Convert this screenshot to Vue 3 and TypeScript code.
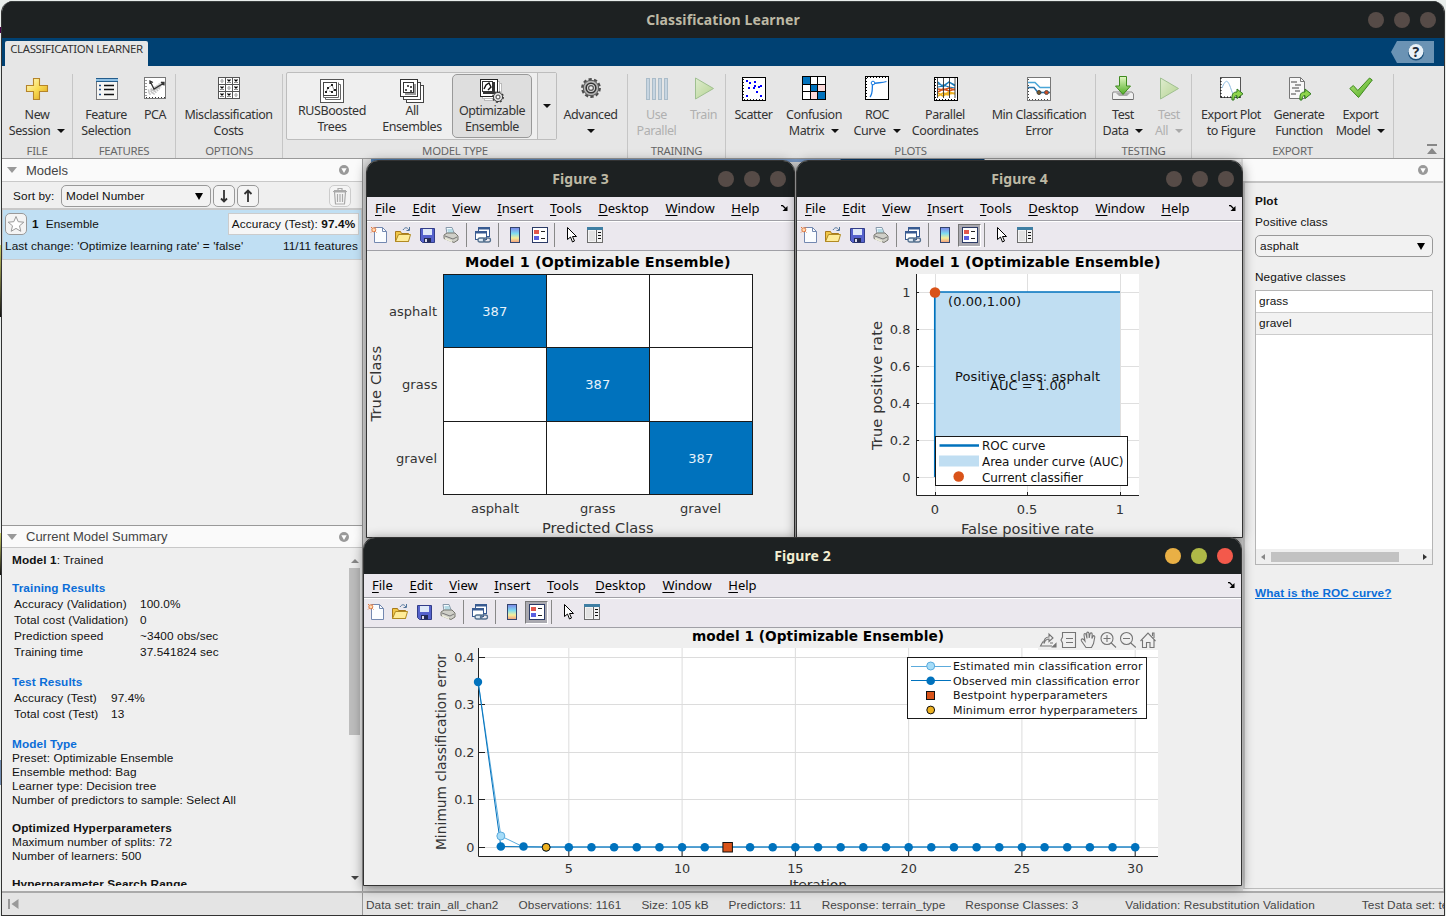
<script setup lang="ts">
interface Tool {
  icon: string
  lines: string[]
  w: number
  arrow?: boolean
  disabled?: boolean
}
interface Section {
  name: string
  w: number
  pad: number
  tools: Tool[]
}
interface Label {
  t: string
  x: number
  y: number
  w: number
  s: number
}

const icons: Record<string, string> = {
  plus: '<defs><linearGradient id="gp" x1="0" y1="0" x2="1" y2="1"><stop offset="0" stop-color="#fffbd0"/><stop offset=".5" stop-color="#f9dc55"/><stop offset="1" stop-color="#dba013"/></linearGradient></defs><path d="M8.5 1.5h6v7h8v6h-8v8h-6v-8h-7v-6h7z" fill="url(#gp)" stroke="#b5842a" stroke-width="1.1"/>',
  feature: '<g transform="translate(1 0)"><rect x="1.5" y="1.5" width="21" height="21" fill="#f5f5f3" stroke="#77777a"/><rect x="1" y="1" width="22" height="4" fill="#8fc0e4"/><path d="M1 4.5h22M1 1.5h22" stroke="#245d8c"/><path d="M9 8.5h10M9 12.5h10M9 17.5h10" stroke="#111" stroke-width="1.4"/><path d="M4 8.5h2M4 12.5h2M4 17.5h2" stroke="#1b4c8c" stroke-width="1.6"/></g>',
  pca: '<rect x="1.5" y=".5" width="21" height="21" fill="#fff" stroke="#777"/><path d="M3 3v18M3 20.5h19" stroke="#333" stroke-dasharray="1 2"/><path d="M6 17L20 6M8 13l10-4M10 17l7-7M5 14l5-1M12 11l8-6" stroke="#c4c4c4" stroke-width="3" stroke-dasharray="1.5 1"/><path d="M7 4l4 8 10-6M7 7V4l3 1.5M18 5.5h3v3" fill="none" stroke="#333" stroke-width="1.3"/>',
  costs: '<rect x="1.5" y=".5" width="21" height="21" fill="#fff" stroke="#555"/><path d="M8.5 0v22M15.5 0v22M1 7.5h22M1 14.5h22" stroke="#555"/><path d="M10.5 2.5l3 3m0-3l-3 3M17.5 2.5l3 3m0-3l-3 3M3.5 9.5l3 3m0-3l-3 3M17.5 9.5l3 3m0-3l-3 3M3.5 16.5l3 3m0-3l-3 3M10.5 16.5l3 3m0-3l-3 3" stroke="#000" stroke-width="1.2"/><g fill="none" stroke="#999"><ellipse cx="5" cy="4" rx="1" ry="1.5"/><ellipse cx="12" cy="11" rx="1" ry="1.5"/><ellipse cx="19" cy="18" rx="1" ry="1.5"/></g>',
  trees: '<rect x=".5" y=".5" width="23" height="23" fill="#fff" stroke="#555"/><path d="M5.5 18v2.5h15V5.5H18M3.5 16v2.5h15V3.5" fill="none" stroke="#666"/><rect x="3.5" y="3.5" width="13" height="13" fill="#fff" stroke="#444"/><path d="M6 13l2-4 4-3 2 5-2 2-3-1" fill="none" stroke="#999"/><path d="M5 12h2v2H5zM7 8h2v2H7zM11 5h2v2h-2zM14 10h2v2h-2zM11 12h2v2h-2z" fill="#222"/>',
  all: '<rect x="6.5" y="6.5" width="17" height="17" fill="#fff" stroke="#444"/><rect x="3.5" y="3.5" width="17" height="17" fill="#fff" stroke="#444"/><rect x=".5" y=".5" width="17" height="17" fill="#fff" stroke="#333"/><rect x="5" y="5" width="11" height="11" fill="#999"/><rect x="3.5" y="3.5" width="10" height="10" fill="#fff" stroke="#333"/><path d="M5 10h2v2H5zM7 6h2v2H7zM10 7h2v2h-2zM10 11h2v2h-2z" fill="#555"/>',
  opt: '<g fill="#fff" stroke="#bbb"><rect x="4.5" y="4.5" width="17" height="17"/><rect x="2.5" y="2.5" width="17" height="17"/></g><rect x=".5" y=".5" width="17" height="17" fill="#fff" stroke="#222"/><rect x="3" y="3" width="12" height="12" fill="#333"/><rect x="2.5" y="2.5" width="10" height="10" fill="#fff" stroke="#333"/><path d="M4 10l2-4 3-2 2 4-3 3" fill="none" stroke="#111" stroke-width="1.4"/><circle cx="18" cy="18" r="4.600" fill="#ddd" stroke="#444"/><circle cx="18" cy="18" r="5.300" fill="none" stroke="#333" stroke-width="1.2" stroke-dasharray="2 2.160"/><circle cx="18" cy="18" r="2" fill="#fff" stroke="#444"/>',
  gear: '<circle cx="12" cy="11" r="8.800" fill="none" stroke="#4d4d4d" stroke-width="2.200" stroke-dasharray="3.300 2.230"/><circle cx="12" cy="11" r="7.700" fill="#b5b5b5" stroke="#555"/><circle cx="12" cy="11" r="4.800" fill="#d8d8d8" stroke="#333" stroke-width="1.6"/><circle cx="12" cy="11" r="2.400" fill="#eee" stroke="#555" stroke-width="1.2"/>',
  parallel: '<g fill="#a9c6de" stroke="#6f93ae"><rect x="1.5" y="1.5" width="3" height="21"/><rect x="7.5" y="1.5" width="3" height="21"/><rect x="13.5" y="1.5" width="3" height="21"/><rect x="19.5" y="1.5" width="3" height="21"/></g>',
  play: '<defs><linearGradient id="gg" x1="0" y1="0" x2="1" y2="1"><stop offset="0" stop-color="#d9f2b9"/><stop offset="1" stop-color="#86c440"/></linearGradient></defs><path d="M3.5 1L21.5 11.5 3.5 22z" fill="url(#gg)" stroke="#5b9b3c"/>',
  scatter: '<rect x=".5" y=".5" width="23" height="23" fill="#fff" stroke="#000"/><path d="M1.5 2v20M2 22.5h20" stroke="#222" stroke-dasharray="1 2"/><path d="M4 3h2v2H4zM7 5h2v2H7zM12 4h2v2h-2zM6 10h2v2H6zM12 8h2v2h-2zM11 10h2v2h-2zM16 9h2v2h-2zM18 8h2v2h-2zM14 14h2v2h-2zM4 18h2v2H4zM18 18h2v2h-2z" fill="#00f"/>',
  confusion: '<g transform="translate(0 -1)"><rect x=".5" y=".5" width="23" height="23" fill="#fff" stroke="#000"/><path d="M1 1h7v7H1zM9 9h6v6H9zM16 16h7v7h-7z" fill="#0072bd"/><path d="M16 9h7v6h-7zM9 16h6v7H9z" fill="#fbd9d9"/><path d="M8.5 0v24M15.5 0v24M0 8.5h24M0 15.5h24" stroke="#000"/></g>',
  roc: '<g transform="translate(0 -1)"><rect x=".5" y=".5" width="23" height="23" fill="#fff" stroke="#000"/><path d="M2 1.5h21M1.5 2v21" stroke="#000" stroke-dasharray="1 2"/><path d="M5 21c3-4 2-7 2.500-13 4-2 9-.5 14-2.500" fill="none" stroke="#1a7be0" stroke-width="1.3"/><circle cx="8" cy="7" r="1.800" fill="#fff" stroke="#1a7be0"/></g>',
  coords: '<g transform="translate(1 0)"><rect x=".5" y=".5" width="23" height="23" fill="#fff" stroke="#000"/><path d="M1.5 2v20M2 22.5h20" stroke="#000" stroke-dasharray="1 2"/><g fill="none" stroke-width="1.2"><path d="M4 5l5 5 6-5 6 4M4 7l5 1 6 2 6 1M4 10l5-1 6-4 6 3" stroke="#1a7ab8"/><path d="M4 12l5 1 6-2 6 2M4 15l5-3 6 2 6-2" stroke="#d95319" stroke-width="1.6"/><path d="M4 19l5-3 6 1 6-1M4 16l5 3 6-4 6 2M9 17l6 1" stroke="#edb120" stroke-width="1.6"/></g><path d="M3.500 1v20M9.500 1v20M15.500 1v20M21 1v20" stroke="#333" stroke-width=".9"/></g>',
  minerr: '<rect x=".5" y=".5" width="23" height="23" fill="#fff" stroke="#777"/><path d="M2 22.5h21M1.5 2v20" stroke="#444" stroke-dasharray="1 2"/><path d="M1 5.5h7l5 5h10" fill="none" stroke="#4aa6d8" stroke-width="1.5"/><path d="M1 10.5h6l4 5h12" fill="none" stroke="#2875ac" stroke-width="1.5"/><circle cx="12" cy="15.5" r="2" fill="#7a5a2a" stroke="#444"/><circle cx="19.5" cy="15.5" r="2" fill="#d04a20" stroke="#555"/>',
  testdata: '<path d="M2 15l-.5 2v5.500h21V17L21 15z" fill="#f0f0f0" stroke="#888"/><path d="M2 22.500h20" stroke="#666"/><path d="M5 16l3 3h8l3-3z" fill="#aaa"/><path d="M8.500 -.5h7V9h4L12 17.500 4.500 9h4z" fill="url(#gd)" stroke="#3f8a1e"/><defs><linearGradient id="gd" x1="0" y1="0" x2="0" y2="1"><stop offset="0" stop-color="#e2f7c4"/><stop offset="1" stop-color="#4fae23"/></linearGradient></defs>',
  exportplot: '<rect x="1.5" y=".5" width="20" height="20" fill="#fff" stroke="#555"/><path d="M2 1v20M2 20h20" stroke="#000" stroke-dasharray="1 2"/><path d="M3 11c4-10 6-8 9 1s5 8 7 4" fill="none" stroke="#8bbbe0"/><path d="M13 23c-.5-6 1-8 5-8v-3l6 4.800-6 4.800v-3c-2 0-3 1-3 4.400z" fill="#8ed44b" stroke="#2f7a1e"/>',
  generate: '<path d="M2.500 .5h11l4 4v17h-15z" fill="#f8f8f8" stroke="#777"/><path d="M13.500 .5v4h4" fill="none" stroke="#777"/><path d="M4 5h6M8 8h6M5 11h7M8 14h5M4 17h5" stroke="#444"/><path d="M13 23c-.5-6 1-8 5-8v-3l6 4.800-6 4.800v-3c-2 0-3 1-3 4.400z" fill="#8ed44b" stroke="#2f7a1e"/>',
  check: '<path d="M.8 11.500l3.500-3 4.500 5L20.500 1l2.800 2L9.500 20.500z" fill="url(#gc)" stroke="#3f8a1e"/><defs><linearGradient id="gc" x1="0" y1="0" x2="1" y2="1"><stop offset="0" stop-color="#b8ea7a"/><stop offset="1" stop-color="#4aa621"/></linearGradient></defs>',
}

const before: Section[] = [
  { name: 'FILE', w: 71, pad: 0, tools: [{ icon: 'plus', lines: ['New', 'Session'], w: 70, arrow: true }] },
  {
    name: 'FEATURES', w: 103, pad: 4, tools: [
      { icon: 'feature', lines: ['Feature', 'Selection'], w: 58 },
      { icon: 'pca', lines: ['PCA'], w: 40 },
    ],
  },
  { name: 'OPTIONS', w: 107, pad: 0, tools: [{ icon: 'costs', lines: ['Misclassification', 'Costs'], w: 105 }] },
]
const after: Section[] = [
  {
    name: 'TRAINING', w: 98, pad: 0, tools: [
      { icon: 'parallel', lines: ['Use', 'Parallel'], w: 57, disabled: true },
      { icon: 'play', lines: ['Train'], w: 37, disabled: true },
    ],
  },
  {
    name: 'PLOTS', w: 370, pad: 0, tools: [
      { icon: 'scatter', lines: ['Scatter'], w: 55 },
      { icon: 'confusion', lines: ['Confusion', 'Matrix'], w: 66, arrow: true },
      { icon: 'roc', lines: ['ROC', 'Curve'], w: 60, arrow: true },
      { icon: 'coords', lines: ['Parallel', 'Coordinates'], w: 76 },
      { icon: 'minerr', lines: ['Min Classification', 'Error'], w: 112 },
    ],
  },
  {
    name: 'TESTING', w: 96, pad: 2, tools: [
      { icon: 'testdata', lines: ['Test', 'Data'], w: 50, arrow: true },
      { icon: 'play', lines: ['Test', 'All'], w: 42, arrow: true, disabled: true },
    ],
  },
  {
    name: 'EXPORT', w: 202, pad: 0, tools: [
      { icon: 'exportplot', lines: ['Export Plot', 'to Figure'], w: 78 },
      { icon: 'generate', lines: ['Generate', 'Function'], w: 58 },
      { icon: 'check', lines: ['Export', 'Model'], w: 65, arrow: true },
    ],
  },
]
const gallery = [
  { icon: 'trees', lines: ['RUSBoosted', 'Trees'] },
  { icon: 'all', lines: ['All', 'Ensembles'] },
  { icon: 'opt', lines: ['Optimizable', 'Ensemble'] },
]

const status = ['Data set: train_all_chan2', 'Observations: 1161', 'Size: 105 kB', 'Predictors: 11', 'Response: terrain_type', 'Response Classes: 3']

const training = [
  ['Accuracy (Validation)', '100.0%'],
  ['Total cost (Validation)', '0'],
  ['Prediction speed', '~3400 obs/sec'],
  ['Training time', '37.541824 sec'],
]
const testing = [
  ['Accuracy (Test)', '97.4%'],
  ['Total cost (Test)', '13'],
]

const figures = [
  { id: 'f3', title: 'Figure 3', pressed: false, active: false },
  { id: 'f4', title: 'Figure 4', pressed: true, active: false },
  { id: 'f2', title: 'Figure 2', pressed: true, active: true },
]
const menus = ['File', 'Edit', 'View', 'Insert', 'Tools', 'Desktop', 'Window', 'Help']

const bar: Record<string, string> = {
  fnew: '<path d="M4.5 1.5h8l4 4v11h-12z" fill="#fbfdff" stroke="#7388b0"/><path d="M12.5 1.5v4h4" fill="none" stroke="#7388b0"/><circle cx="3.800" cy="3.800" r="2" fill="#ffd9b0" stroke="#e07840"/><path d="M1 1l1 1M6.500 1l-1 1M1 6.500l1-1M5.500 5.500l1 1" stroke="#e07840"/>',
  open: '<path d="M1.500 15.500v-10h5l1 2h7v8z" fill="#f0c648" stroke="#a8791a"/><path d="M1.500 15.500l3-7h12l-2 7z" fill="#ffec98" stroke="#b18a22"/><path d="M9 4c2-3 4-3 6 0M15.500 1v3.500h-3" fill="none" stroke="#51749b"/>',
  save: '<path d="M2.500 2.500h14v14h-12l-2-2z" fill="#5562cc" stroke="#333d88"/><rect x="5" y="3" width="9" height="6" fill="#dfe9f8"/><rect x="6" y="12" width="7" height="4.500" fill="#222a54"/><rect x="7" y="13" width="2" height="3" fill="#dde"/>',
  print: '<path d="M5 8L4 1.500h6L12.500 8z" fill="#f4faff" stroke="#8899aa"/><path d="M5.500 4h5M6 6h5" stroke="#7bc"/><path d="M2 9l3-2h8l3 3v4l-4 2.500-10-4z" fill="#cfcfc8" stroke="#77776f"/><path d="M3 10l8 3 4-2" fill="none" stroke="#777"/><path d="M3 12.500l7 3" stroke="#eed" stroke-width="1.5"/>',
  link: '<rect x="4.5" y="1.500" width="11" height="9" fill="#fff" stroke="#385a91"/><path d="M4 2.500h12" stroke="#385a91" stroke-width="2"/><rect x="1.5" y="5.500" width="11" height="8" fill="#fff" stroke="#385a91"/><path d="M1 6.500h12" stroke="#385a91" stroke-width="2"/><rect x="4" y="12" width="7" height="4" rx="2" fill="#dde8f2" stroke="#54708e" stroke-width="1.3"/><rect x="9.500" y="12" width="7" height="4" rx="2" fill="none" stroke="#54708e" stroke-width="1.3"/>',
  colorbar: '<defs><linearGradient id="cb" x1="0" y1="0" x2="0" y2="1"><stop offset="0" stop-color="#7c83e8"/><stop offset=".4" stop-color="#7fdcf0"/><stop offset=".7" stop-color="#f6ef9a"/><stop offset="1" stop-color="#f19a7c"/></linearGradient></defs><rect x="4.5" y="1.500" width="9" height="15" fill="url(#cb)" stroke="#33456e"/>',
  legend: '<rect x="1.5" y="1.5" width="15" height="15" fill="#fff" stroke="#2b3a66"/><rect x="3" y="4" width="5" height="4" fill="#e2574c"/><rect x="3" y="10" width="5" height="4" fill="#5a60e0"/><path d="M10 5.5h4M10 12.5h4" stroke="#222"/>',
  cursor: '<path d="M5.5 1.5v12l3-2.500 2 5 2-1-2-4.500h4z" fill="#fff" stroke="#000"/>',
  inspector: '<rect x="1.500" y="1.500" width="15" height="15" fill="#f3f3f3" stroke="#6d6d6d"/><rect x="1" y="1" width="16" height="3" fill="#3e7ea3"/><path d="M10.500 4v12" stroke="#666"/><rect x="3" y="5" width="6" height="10" fill="#e2e2e2"/><path d="M12 6.500h3M12 9.500h3M12 12.500h3" stroke="#111"/>',
}
const barLeft = ['fnew', 'open', 'save', 'print']

const cells = Array.from({ length: 9 }, (_, i) => ({ c: i % 3, r: Math.floor(i / 3) }))
const cx = [443.5, 546.5, 649.5, 752.5]
const cy = [274.5, 347.5, 421.5, 494.5]
const f3labels: Label[] = [
  { t: 'asphalt', x: 389, y: 316, w: 48, s: 13 },
  { t: 'grass', x: 402, y: 389, w: 35.5, s: 13 },
  { t: 'gravel', x: 396, y: 463, w: 41, s: 13 },
  { t: 'asphalt', x: 471, y: 513, w: 48, s: 13 },
  { t: 'grass', x: 580, y: 513, w: 35.5, s: 13 },
  { t: 'gravel', x: 680, y: 513, w: 41, s: 13 },
  { t: 'Predicted Class', x: 542, y: 532.5, w: 111.5, s: 14.6 },
]
const f4y = [292.5, 329.5, 366.5, 403.5, 440.5, 477.5]
const f4yl = ['1', '0.8', '0.6', '0.4', '0.2', '0']
const f4x = [935.5, 1027.5, 1120.5]
const f4xl = ['0', '0.5', '1']
const f4labels: Label[] = [
  { t: '(0.00,1.00)', x: 948, y: 306, w: 73, s: 13 },
  { t: 'Positive class: asphalt', x: 955, y: 381, w: 145, s: 13 },
  { t: 'AUC = 1.00', x: 990, y: 390, w: 76, s: 13 },
]
const f4legend: Label[] = [
  { t: 'ROC curve', x: 982, y: 450, w: 63.5, s: 12 },
  { t: 'Area under curve (AUC)', x: 982, y: 466, w: 141.5, s: 12 },
  { t: 'Current classifier', x: 982, y: 482, w: 101, s: 12 },
]
const px = (i: number): number => 478.2 + (i - 1) * 22.655
const f2y = [657.5, 704.5, 752.5, 799.5, 847.5]
const f2yl = ['0.4', '0.3', '0.2', '0.1', '0']
const f2x = [5, 10, 15, 20, 25, 30]
const iters = Array.from({ length: 28 }, (_, i) => i + 3)
const f2legend: Label[] = [
  { t: 'Estimated min classification error', x: 953, y: 670, w: 189.5, s: 11 },
  { t: 'Observed min classification error', x: 953, y: 685, w: 186.5, s: 11 },
  { t: 'Bestpoint hyperparameters', x: 953, y: 699, w: 154.5, s: 11 },
  { t: 'Minimum error hyperparameters', x: 953, y: 714, w: 184.5, s: 11 },
]
</script>

<template>
  <div class="desktop">
    <div class="app">
      <div class="title">
        <span>Classification Learner</span>
        <i class="dots"><b /><b /><b /></i>
      </div>
      <div class="tabs">
        <div class="tab">CLASSIFICATION LEARNER</div>
        <svg class="help" width="43" height="22" viewBox="0 0 43 22">
          <path d="M0 11L6 0h37v22H6z" fill="#6b93b4" />
          <circle cx="25" cy="11.5" r="8" fill="#174d78" />
          <circle cx="25" cy="10.5" r="7.5" fill="#e9f1f7" />
          <text x="25" y="15.500" text-anchor="middle" class="q">?</text>
        </svg>
      </div>
      <div class="strip">
        <section v-for="s in before" :key="s.name" :style="{ width: s.w + 'px' }">
          <div class="tools" :style="{ paddingLeft: s.pad + 'px' }">
            <div v-for="t in s.tools" :key="t.icon" class="tool" :style="{ width: t.w + 'px' }">
              <svg width="24" height="24" viewBox="0 0 24 24" v-html="icons[t.icon]" />
              <span>{{ t.lines[0] }}</span>
              <span>{{ t.lines[1] }}<i v-if="t.arrow" class="arr" /></span>
            </div>
          </div>
          <h6>{{ s.name }}</h6>
        </section>
        <section class="types">
          <div class="tools">
            <div class="gallery">
              <div v-for="g in gallery" :key="g.icon" class="gitem" :class="{ on: g.icon === 'opt' }">
                <svg width="24" height="24" viewBox="0 0 24 24" v-html="icons[g.icon]" />
                <span>{{ g.lines[0] }}</span><span>{{ g.lines[1] }}</span>
              </div>
              <div class="more"><i class="arr" /></div>
            </div>
            <div class="tool adv">
              <svg width="24" height="24" viewBox="0 0 24 24" v-html="icons.gear" />
              <span>Advanced</span>
              <span><i class="arr lone" /></span>
            </div>
          </div>
          <h6>MODEL TYPE</h6>
        </section>
        <section v-for="s in after" :key="s.name" :style="{ width: s.w + 'px' }">
          <div class="tools" :style="{ paddingLeft: s.pad + 'px' }">
            <div v-for="t in s.tools" :key="t.icon" class="tool" :class="{ off: t.disabled }" :style="{ width: t.w + 'px' }">
              <svg width="24" height="24" viewBox="0 0 24 24" v-html="icons[t.icon]" />
              <span>{{ t.lines[0] }}</span>
              <span>{{ t.lines[1] }}<i v-if="t.arrow" class="arr" /></span>
            </div>
          </div>
          <h6>{{ s.name }}</h6>
        </section>
        <svg class="collapse" width="10" height="11" viewBox="0 0 10 11"><path d="M0 0h10v2H0zM5 4l5 6H0z" fill="#888" /></svg>
      </div>

      <div class="body">
        <aside class="left">
          <div class="phead"><i class="tri" />Models
            <svg width="10" height="10" viewBox="0 0 10 10"><circle cx="5" cy="5" r="5" fill="#999" /><path d="M2.300 3.300h5.400L5 8z" fill="#fff" /></svg>
          </div>
          <div class="sort">
            <span class="by">Sort by:</span>
            <div class="select"><span>Model Number</span><i class="dd" /></div>
            <div class="btn"><svg width="12" height="16" viewBox="0 0 12 16"><path d="M6 2v11M3 10.500L6 13.500 9 10.500" fill="none" stroke="#333" stroke-width="1.800" /></svg></div>
            <div class="btn"><svg width="12" height="16" viewBox="0 0 12 16"><path d="M6 14V3M2.500 6L6 2.500 9.500 6" fill="none" stroke="#333" stroke-width="1.800" /></svg></div>
            <div class="btn trash"><svg width="16" height="18" viewBox="0 0 16 18"><path d="M2.500 5h11l-1 12h-9zM1 4.500h14M2 3.500h12M6 3V1.500h4V3M5.500 7v8M8 7v8M10.500 7v8" fill="none" stroke="#aaa" stroke-width="1.200" /></svg></div>
          </div>
          <div class="model">
            <div class="mrow">
              <div class="btn star"><svg width="18" height="18" viewBox="0 0 18 18"><path d="M9 1.500l2.200 5.200 5.600.5-4.300 3.600 1.300 5.500L9 13.400l-4.800 2.900 1.300-5.500L1.200 7.200l5.600-.5z" fill="#fff" stroke="#999" /></svg></div>
              <b>1</b><span class="ens">Ensemble</span>
              <div class="acc">Accuracy (Test): <b>97.4%</b></div>
            </div>
            <div class="mchg"><span>Last change: 'Optimize learning rate' = 'false'</span><span class="feat">11/11 features</span></div>
          </div>
          <div class="blank" />
          <div class="phead second"><i class="tri" />Current Model Summary
            <svg width="10" height="10" viewBox="0 0 10 10"><circle cx="5" cy="5" r="5" fill="#999" /><path d="M2.300 3.300h5.400L5 8z" fill="#fff" /></svg>
          </div>
          <div class="summary">
            <div class="stext">
              <p class="first"><b>Model 1</b>: Trained</p>
              <p class="h">Training Results</p>
              <div v-for="r in training" :key="r[0]" class="kv"><span>{{ r[0] }}</span><span>{{ r[1] }}</span></div>
              <p class="h results">Test Results</p>
              <div v-for="r in testing" :key="r[0]" class="kv short"><span>{{ r[0] }}</span><span>{{ r[1] }}</span></div>
              <p class="h kind">Model Type</p>
              <p>Preset: Optimizable Ensemble</p>
              <p>Ensemble method: Bag</p>
              <p>Learner type: Decision tree</p>
              <p>Number of predictors to sample: Select All</p>
              <p class="gap"><b>Optimized Hyperparameters</b></p>
              <p>Maximum number of splits: 72</p>
              <p>Number of learners: 500</p>
              <p class="gap"><b>Hyperparameter Search Range</b></p>
            </div>
            <div class="vscroll"><i class="up" /><i class="thumb" /><i class="down" /></div>
          </div>
        </aside>
        <main class="center" />
        <aside class="right">
          <div class="phead rh">
            <svg width="10" height="10" viewBox="0 0 10 10"><circle cx="5" cy="5" r="5" fill="#999" /><path d="M2.300 3.300h5.400L5 8z" fill="#fff" /></svg>
          </div>
          <div class="rbody">
            <p><b>Plot</b></p>
            <p>Positive class</p>
            <div class="select wide"><span>asphalt</span><i class="dd" /></div>
            <p class="neg">Negative classes</p>
            <div class="list">
              <div>grass</div>
              <div class="alt">gravel</div>
              <div class="hscroll"><i class="la" /><i class="hthumb" /><i class="ra" /></div>
            </div>
            <p class="link">What is the ROC curve?</p>
          </div>
        </aside>
      </div>

      <footer>
        <div class="fleft"><svg width="11" height="12" viewBox="0 0 11 12"><path d="M0 1h2v10H0zM10.500 1v10L3.500 6z" fill="#999" /></svg></div>
        <div class="fitems">
          <span v-for="s in status" :key="s">{{ s }}</span>
          <span class="far">Validation: Resubstitution Validation</span>
          <span class="far">Test Data set: test_all_chan2</span>
        </div>
      </footer>
    </div>

    <div v-for="f in figures" :key="f.id" class="fig" :class="[f.id, { active: f.active }]">
      <div class="title"><span>{{ f.title }}</span><i class="dots"><b /><b /><b /></i></div>
      <div class="menu">
        <span v-for="m in menus" :key="m"><u>{{ m[0] }}</u>{{ m.slice(1) }}</span>
        <svg width="7" height="6" viewBox="0 0 7 6"><path d="M0 .5h1.500L5 4" fill="none" stroke="#000" stroke-width="1.300" /><path d="M6.500 1v5H1.500z" fill="#000" /></svg>
      </div>
      <div class="bar">
        <svg v-for="b in barLeft" :key="b" width="18" height="18" viewBox="0 0 18 18" v-html="bar[b]" />
        <i class="sep" />
        <svg class="shift" width="18" height="18" viewBox="0 0 18 18" v-html="bar.link" />
        <i class="sep" />
        <svg class="shift" width="18" height="18" viewBox="0 0 18 18" v-html="bar.colorbar" />
        <div class="press" :class="{ down: f.pressed }"><svg width="18" height="18" viewBox="0 0 18 18" v-html="bar.legend" /></div>
        <i class="sep close" />
        <svg width="18" height="18" viewBox="0 0 18 18" v-html="bar.cursor" />
        <svg width="18" height="18" viewBox="0 0 18 18" v-html="bar.inspector" />
      </div>

      <svg v-if="f.id === 'f3'" class="plot" viewBox="367 251 427 286" width="427" height="286">
        <text x="465" y="267" textLength="265.500" class="bold" font-size="14.400">Model 1 (Optimizable Ensemble)</text>
        <g v-for="c in cells" :key="c.c + c.r * 3">
          <rect :x="cx[c.c]" :y="cy[c.r]" :width="cx[c.c + 1] - cx[c.c]" :height="cy[c.r + 1] - cy[c.r]" :fill="c.c === c.r ? '#0072bd' : '#fff'" stroke="#1a1a1a" />
          <text v-if="c.c === c.r" :x="cx[c.c] + 38.700" :y="cy[c.r] + 41.500" fill="#e5f0f8" font-size="13" textLength="25">387</text>
        </g>
        <text v-for="(l, i) in f3labels" :key="i" :x="l.x" :y="l.y" :textLength="l.w" :font-size="l.s">{{ l.t }}</text>
        <text transform="translate(381 421.500) rotate(-90)" font-size="14.600" textLength="75.500">True Class</text>
      </svg>

      <svg v-else-if="f.id === 'f4'" class="plot" viewBox="797 251 445 286" width="445" height="286">
        <text x="895" y="267" textLength="265.500" class="bold" font-size="14.400">Model 1 (Optimizable Ensemble)</text>
        <rect x="916" y="274" width="223" height="222" fill="#fff" />
        <path v-for="y in f4y" :key="y" :d="`M917 ${y}H1139`" stroke="#dfdfdf" />
        <path v-for="x in f4x" :key="x" :d="`M${x} 274V495`" stroke="#dfdfdf" />
        <rect x="935" y="292" width="185" height="185" fill="#c0def2" />
        <path d="M934.800 477V292H1120" fill="none" stroke="#0072bd" stroke-width="1.700" />
        <circle cx="935" cy="292.500" r="5.300" fill="#d95319" />
        <path d="M916.500 274V495.500H1139" fill="none" stroke="#222" />
        <path v-for="y in f4y" :key="'t' + y" :d="`M916 ${y}h3`" stroke="#222" />
        <path v-for="x in f4x" :key="'t' + x" :d="`M${x} 495v-3`" stroke="#222" />
        <text v-for="(t, i) in f4yl" :key="'y' + t" x="910.500" :y="f4y[i] + 4.500" text-anchor="end" font-size="13">{{ t }}</text>
        <text v-for="(t, i) in f4xl" :key="'x' + t" :x="f4x[i] - .5" y="514" text-anchor="middle" font-size="13">{{ t }}</text>
        <text v-for="(l, i) in f4labels" :key="i" :x="l.x" :y="l.y" :textLength="l.w" :font-size="l.s" class="dark">{{ l.t }}</text>
        <text x="961" y="533.500" textLength="133" font-size="14.600">False positive rate</text>
        <text transform="translate(882 450) rotate(-90)" font-size="14.600" textLength="129">True positive rate</text>
        <rect x="935.5" y="436.5" width="192" height="49" fill="#fff" stroke="#1a1a1a" />
        <path d="M939.500 445.500H979" stroke="#0072bd" stroke-width="2.600" />
        <rect x="939" y="455.500" width="40" height="11" fill="#c0def2" />
        <circle cx="958.700" cy="476.500" r="5.300" fill="#d95319" />
        <text v-for="(l, i) in f4legend" :key="'l' + i" :x="l.x" :y="l.y" :textLength="l.w" :font-size="l.s" class="dark">{{ l.t }}</text>
      </svg>

      <svg v-else class="plot" viewBox="364 628 877 257" width="877" height="257">
        <rect x="478" y="648" width="680" height="209" fill="#fff" />
        <path v-for="y in f2y" :key="y" :d="`M479 ${y}H1158`" stroke="#dcdcdc" />
        <path v-for="x in f2x" :key="x" :d="`M${px(x)} 648V856`" stroke="#dcdcdc" />
        <rect x="1038" y="628" width="120" height="22" fill="#efefef" />
        <path d="M478.500 648V856.500H1158" fill="none" stroke="#222" />
        <path v-for="y in f2y" :key="'t' + y" :d="`M478 ${y}h7`" stroke="#222" />
        <path v-for="x in f2x" :key="'t' + x" :d="`M${px(x)} 856v-7`" stroke="#222" />
        <path :d="`M478.200 682L${px(2)} 836 ${px(3)} 847H${px(30)}`" fill="none" stroke="#5cabdc" />
        <path :d="`M478.200 682L${px(2)} 846.500 ${px(4)} 847H${px(30)}`" fill="none" stroke="#0072bd" />
        <circle cx="478" cy="682" r="4.200" fill="#0072bd" />
        <circle :cx="px(2)" cy="836" r="4" fill="#a5dcf8" stroke="#5cabdc" />
        <circle :cx="px(2)" cy="846.500" r="4.300" fill="#0072bd" />
        <circle v-for="i in iters" :key="i" :cx="px(i)" :cy="i === 3 ? 846.5 : 847.3" r="4.300" fill="#0072bd" />
        <circle :cx="px(4)" cy="847.300" r="3.900" fill="#edb120" stroke="#111" />
        <rect :x="px(12) - 4.5" y="842.500" width="9.500" height="9.500" fill="#d95319" stroke="#111" />
        <text x="692" y="641" textLength="252" class="bold" font-size="13.700">model 1 (Optimizable Ensemble)</text>
        <text v-for="(t, i) in f2yl" :key="'y' + t" x="474.500" :y="f2y[i] + 4.700" text-anchor="end" font-size="12.800">{{ t }}</text>
        <text v-for="x in f2x" :key="'x' + x" :x="px(x)" y="873" text-anchor="middle" font-size="12.800">{{ x }}</text>
        <text x="789" y="890" textLength="58" font-size="13.900">Iteration</text>
        <text transform="translate(445.800 850) rotate(-90)" textLength="196" font-size="13.700">Minimum classification error</text>
        <rect x="907.5" y="657.5" width="239" height="61" fill="#fff" stroke="#1a1a1a" />
        <path d="M911 666.500h40" stroke="#5cabdc" />
        <path d="M911 680.500h40" stroke="#0072bd" />
        <circle cx="930.700" cy="666" r="4" fill="#a5dcf8" stroke="#5cabdc" />
        <circle cx="930.700" cy="680.700" r="4.300" fill="#0072bd" />
        <rect x="926.500" y="691.500" width="8" height="8" fill="#d95319" stroke="#111" />
        <circle cx="930.700" cy="710" r="3.900" fill="#edb120" stroke="#111" />
        <text v-for="(l, i) in f2legend" :key="'l' + i" :x="l.x" :y="l.y" :textLength="l.w" :font-size="l.s" class="dark">{{ l.t }}</text>
        <g fill="none" stroke="#757575" stroke-width="1.100">
          <path d="M1043 641.500l-2.500 4.500h11.500M1044 643.500c-.5-4.500 2-6.500 5-6.500v-3l4 4-4 3.500V639c-2.500 0-4 1.500-5 4.500zM1050 643l3 0" />
          <path d="M1052.500 647h3.500v-3.500z" fill="#757575" />
          <path d="M1062.500 637v-4.500h13v15h-13V643l-1.500-3zM1066 638.500h7M1066 642.500h7" />
          <path d="M1086 647.500l-4.500-6.500c-1-2 1-3 2.500-1.200l1 1.200-1-6c0-1.800 1.700-2 2.200 0l.8 3.500-.3-5c0-1.800 2.100-1.800 2.300 0l.2 4.500.8-4c.3-1.700 2.200-1.500 2.200.3l-.3 4.200 1-2c.6-1.400 2-1 1.900.5l-1.300 6.500-2 4z" />
          <circle cx="1107" cy="638.500" r="6" /><path d="M1111.300 643l4.700 4.500M1103.500 638.500h7M1107 635v7" />
          <circle cx="1126.500" cy="638.500" r="6" /><path d="M1130.800 643l5 4.500M1123 638.500h7" />
          <path d="M1140.500 641l7.500-8 7.500 8M1142.500 640v7.500h4v-5h3.500v5h4V640M1152.500 636v-3h1.500v5" />
        </g>
      </svg>
    </div>
  </div>
</template>

<style>
html, body { margin: 0; padding: 0; overflow: hidden; }
</style>

<style scoped>
* { box-sizing: border-box; }
.desktop { position: relative; width: 1446px; height: 916px; overflow: hidden; background: linear-gradient(#4a0048, #4a0048) no-repeat 0 27px / 1px 6px, linear-gradient(#cfd36a, #111) no-repeat 0 245px / 1px 72px, linear-gradient(#cfd36a, #111) no-repeat 0 533px / 1px 42px, linear-gradient(#6f8bb0, #6f8bb0) no-repeat 0 760px / 1px 25px, #e9eeec; font-family: "Liberation Sans", Arial, sans-serif; font-size: 11.8px; letter-spacing: .1px; color: #111; }
svg { display: block; flex: none; }
p { margin: 0; }
i, h6 { font-style: normal; font-weight: normal; margin: 0; }
.app { width: 1444px; height: 915px; margin: 1px 0 0 1px; border: 1px solid #333; border-top: 0; border-radius: 12px 12px 0 0; overflow: hidden; display: flex; flex-direction: column; background: #efefef; }
.title { position: relative; flex: none; display: flex; align-items: center; justify-content: center; background: #1d2122; border-top: 1px solid #3a3f3f; font: bold 14px "Noto Sans", sans-serif; letter-spacing: .1px; color: #bdb9a5; }
.title span { padding-bottom: 2px; }
.app > .title { height: 37px; }
.dots { position: absolute; right: 8px; top: 0; bottom: 0; display: flex; gap: 10px; align-items: center; }
.dots b { width: 16px; height: 16px; border-radius: 8px; background: #564b47; }
.tabs { height: 28px; flex: none; background: #004173; display: flex; justify-content: space-between; padding: 3px 10px 0 3px; }
.tab { background: #e6e6e6; height: 25px; width: 143px; text-align: center; font: 11.4px/15px "Noto Sans", sans-serif; letter-spacing: -.32px; white-space: nowrap; color: #333; border-radius: 2px 2px 0 0; }
.q { font: bold 14px "Noto Sans", sans-serif; fill: #222b38; }
.strip { height: 93px; flex: none; background: #e6e6e6; border-bottom: 1px solid #999; display: flex; position: relative; font: 12.5px/16px "Noto Sans", sans-serif; letter-spacing: -.43px; color: #333; }
.strip section { flex: none; height: 84px; margin-top: 8px; border-right: 1px solid #c6c6c6; display: flex; flex-direction: column; }
.strip section.types { width: 345px; }
.tools { display: flex; height: 69px; }
.tool { display: flex; flex-direction: column; align-items: center; flex: none; padding-top: 3px; }
.tool svg { margin-bottom: 6px; overflow: visible; }
.tool span, .gitem span { white-space: nowrap; height: 16px; }
.off svg { opacity: .5; }
.off span { color: #b0b0b0; }
.arr { display: inline-block; width: 0; height: 0; border: 4px solid transparent; border-top-color: #111; border-bottom: 0; margin-left: 7px; vertical-align: 2px; }
.off .arr { border-top-color: #aaa; }
.arr.lone, .more .arr { margin-left: 0; }
h6 { text-align: center; font-size: 11.4px; line-height: 15px; color: #666; letter-spacing: -.3px; }
.gallery { margin: -2px 0 0 3px; width: 271px; height: 68px; border: 1px solid #bdbdbd; border-radius: 2px; background: #efefef; display: flex; padding: 1px 0 0 5px; }
.gitem { width: 80px; height: 64px; display: flex; flex-direction: column; align-items: center; padding-top: 4px; border: 1px solid transparent; border-radius: 5px; }
.gitem.on { background: #dedede; border-color: #999; }
.more { width: 19px; margin: -1px 0 0 5px; border-left: 1px solid #bdbdbd; display: flex; align-items: center; justify-content: center; background: #e6e6e6; }
.adv { width: 67px; }
.collapse { position: absolute; right: 7px; bottom: 3px; }

.body { flex: 1; display: flex; min-height: 0; }
.left { width: 361px; flex: none; border-right: 1px solid #999; display: flex; flex-direction: column; }
.phead { height: 23px; flex: none; background: #fafafa; border-bottom: 1px solid #c8c8c8; display: flex; align-items: center; font-size: 13px; letter-spacing: 0; color: #444; padding: 0 13px 0 5px; }
.phead svg { margin-left: auto; }
.tri { width: 0; height: 0; border: 5px solid transparent; border-top: 6px solid #999; border-bottom: 0; margin-right: 9px; }
.sort { height: 28px; flex: none; display: flex; align-items: center; padding: 2px 11px 0; border-bottom: 2px solid #c8c8c8; }
.by { width: 41px; white-space: nowrap; }
.select { width: 150px; height: 22px; border: 1px solid #999; border-radius: 5px; background: #f2f2f2; display: flex; align-items: center; justify-content: space-between; padding: 0 7px 0 4px; margin: 0 0 0 7px; }
.dd { border: 4px solid transparent; border-top: 7px solid #000; border-bottom: 0; }
.btn { width: 22px; height: 22px; border: 1px solid #999; border-radius: 5px; background: #f4f4f4; display: flex; align-items: center; justify-content: center; margin-left: 2px; flex: none; }
.trash { margin-left: auto; border-color: #ccc; }
.model { height: 50px; flex: none; background: #c0dff3; border: 1px solid #ccc; border-top: 0; padding-top: 3px; }
.mrow { display: flex; align-items: center; height: 22px; }
.star { margin-left: 2px; margin-right: 5px; }
.ens { margin-left: 7px; }
.acc { margin-left: auto; margin-right: 2px; height: 22px; width: 131px; text-align: center; line-height: 20px; background: #f6f6f6; border: 1px solid #ccc; white-space: nowrap; }
.mchg { display: flex; justify-content: space-between; padding: 5px 3px 0 2px; line-height: 12px; white-space: nowrap; }
.blank { height: 265px; flex: none; }
.second { height: 23px; border-top: 1px solid #999; }
.summary { height: 338px; flex: none; display: flex; justify-content: space-between; padding: 5px 0 0 10px; overflow: hidden; }
.stext { line-height: 14px; white-space: nowrap; height: 333px; overflow: hidden; }
.first { margin-bottom: 14px; }
.h { color: #0a6dd8; font-weight: bold; height: 15px; }
.gap { margin-top: 14px; }
.results { margin-top: 15px; }
.kind { margin-top: 15px; height: 14px; }
.kv { display: flex; height: 16px; line-height: 16px; padding-left: 2px; }
.kv span:first-child { width: 126px; }
.kv.short span:first-child { width: 97px; }
.vscroll { width: 13px; margin-right: 1px; display: flex; flex-direction: column; align-items: center; padding-top: 6px; }
.up { border: 4px solid transparent; border-bottom: 4px solid #888; border-top: 0; }
.thumb { width: 11px; height: 167px; margin-top: 5px; background: #bdbdbd; }
.down { border: 4px solid transparent; border-top: 4px solid #444; border-bottom: 0; margin-top: 141px; }
.center { width: 880px; flex: none; background: linear-gradient(90deg, #4e7cae, #7c9cc8 430px, #7c9cc8 469px, #0b3a68 470px, #0b3a68 613px, #eee 614px) no-repeat 8px 0 / 870px 3px, #dcdcdc; }
.right { flex: 1; min-width: 0; display: flex; flex-direction: column; border-right: 1px solid #ccc; }
.rh { padding-right: 15px; height: 24px; border-bottom: 2px solid #c4c4c4; }
.rbody { flex: 1; padding: 11px 0 0 10px; margin-bottom: 2px; border-left: 2px solid #ccc; border-bottom: 1px solid #bbb; line-height: 15px; }
.rbody p + p { margin-top: 6px; }
.select.wide { width: 178px; margin: 5px 0 0; }
.rbody .neg { margin-top: 13px; }
.list { position: relative; width: 178px; height: 275px; margin-top: 5px; border: 1px solid #b5b5b5; background: #fff; }
.list > div { height: 22px; line-height: 21px; padding-left: 3px; border-bottom: 1px solid #ccc; }
.list .alt { background: #f2f2f2; }
.list > .hscroll { position: absolute; left: 0; right: 0; bottom: 0; height: 15px; background: #efefef; border: 0; padding: 0 5px; display: flex; align-items: center; justify-content: space-between; }
.la { border: 3px solid transparent; border-right: 4px solid #888; border-left: 0; }
.ra { border: 3px solid transparent; border-left: 4px solid #333; border-right: 0; }
.hthumb { width: 128px; height: 10px; margin-right: 18px; background: #c2c2c2; }
.rbody .link { margin-top: 21px; color: #0a6dd8; font-weight: bold; text-decoration: underline; }
footer { height: 24px; flex: none; border-top: 2px solid #aaa; background: #e4e4e4; display: flex; color: #444; letter-spacing: .08px; }
.fleft { width: 361px; flex: none; border-right: 1px solid #999; padding: 5px 0 0 6px; }
.fitems { flex: 1; min-width: 0; overflow: hidden; display: flex; gap: 20px; align-items: center; padding: 2px 0 0 3px; white-space: nowrap; }
.fitems span { flex: none; }
.far { margin-left: 27px; }

.fig { position: absolute; display: flex; flex-direction: column; background: #efefef; border: 1px solid #333; border-radius: 12px 12px 0 0; overflow: hidden; box-shadow: 0 2px 12px rgba(0, 0, 0, .45); }
.f3 { left: 366px; top: 160px; width: 429px; height: 378px; }
.f4 { left: 796px; top: 160px; width: 447px; height: 378px; }
.f2 { left: 363px; top: 537px; width: 879px; height: 349px; }
.fig > .title { height: 36px; border-top: 0; }
.active .title { color: #f3efd3; }
.active .dots b:nth-child(1) { background: #e9b045; }
.active .dots b:nth-child(2) { background: #afb947; }
.active .dots b:nth-child(3) { background: #f3594b; }
.menu { height: 24px; flex: none; background: #ebe8ee; border-bottom: 1px solid #a0a0a6; display: flex; align-items: center; gap: 16.6px; padding: 0 6px 2px 8px; font: 13px "Noto Sans", sans-serif; letter-spacing: 0; color: #000; }
.menu svg { margin-left: auto; }
.menu u { text-underline-offset: 2px; }
.bar { height: 30px; flex: none; background: #ebe8ee; border-top: 1px solid #fff; border-bottom: 1px solid #a0a0a6; display: flex; align-items: center; padding: 0 0 2px 3px; gap: 6px; }
.sep { width: 1px; height: 24px; flex: none; background: #888; }
.bar .shift { margin-left: 1px; }
.press { width: 23px; height: 23px; margin: 0 -3px 0 -2px; display: flex; align-items: center; justify-content: center; border: 1px solid transparent; }
.press.down { background: #aaa9b0; border-color: #777 #fff #fff #777; }
.sep.close { margin-right: 1px; }
.plot { font-family: "DejaVu Sans", sans-serif; letter-spacing: 0; }
.plot text { fill: #333; }
.plot text[fill] { fill: #e8f2fa; }
.plot text.bold { font-weight: bold; fill: #000; }
.plot text.dark { fill: #111; }
</style>
